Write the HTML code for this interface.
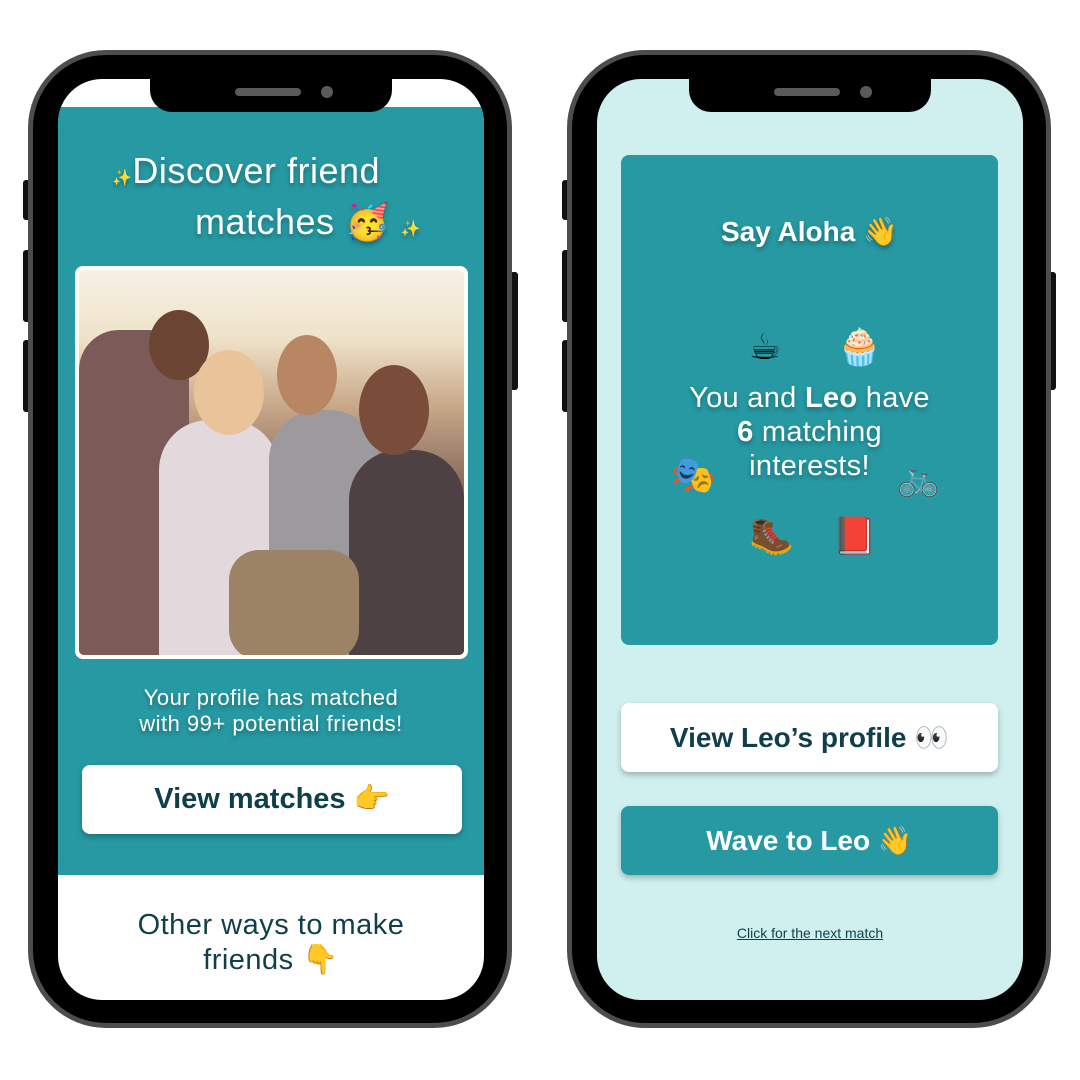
<!DOCTYPE html>
<html><head><meta charset="utf-8"><style>
*{margin:0;padding:0;box-sizing:border-box}
body{width:1080px;height:1080px;background:#fff;position:relative;overflow:hidden;font-family:"Liberation Sans","DejaVu Sans",sans-serif}
.abs{position:absolute}
.phone{position:absolute;top:50px;width:484px;height:978px;border-radius:78px;background:#000;border:5px solid #4d4d4d}
.btn{position:absolute;background:#111;border-radius:3px}
.screen{position:absolute;top:24px;left:25px;width:426px;height:921px;border-radius:44px;overflow:hidden}
.notch{position:absolute;top:0;width:242px;height:33px;background:#000;border-radius:0 0 22px 22px}
.spk{position:absolute;top:9px;width:66px;height:8px;border-radius:4px;background:#5a5a5a}
.cam{position:absolute;top:7px;width:12px;height:12px;border-radius:50%;background:#5a5a5a}
.sh{text-shadow:0 3px 5px rgba(0,0,0,.3)}
.dk{color:#0f3f4b}
.c{text-align:center}
</style></head><body>
<div class="btn" style="left:23px;top:180px;width:8px;height:40px"></div>
<div class="btn" style="left:23px;top:250px;width:8px;height:72px"></div>
<div class="btn" style="left:23px;top:340px;width:8px;height:72px"></div>
<div class="btn" style="left:510px;top:272px;width:8px;height:118px"></div>
<div class="btn" style="left:562px;top:180px;width:8px;height:40px"></div>
<div class="btn" style="left:562px;top:250px;width:8px;height:72px"></div>
<div class="btn" style="left:562px;top:340px;width:8px;height:72px"></div>
<div class="btn" style="left:1048px;top:272px;width:8px;height:118px"></div>

<div class="phone" style="left:28px">
 <div class="screen" style="background:#fff">
  <div class="abs" style="top:28px;left:0;width:426px;height:768px;background:#2699a3"></div>
  <div class="abs sh" style="top:70px;left:0;width:426px;color:#fff;font-size:36px;line-height:43px;letter-spacing:0.5px">
   <div style="padding-left:54px"><span style="font-size:16px">✨</span>Discover friend</div>
   <div style="padding-left:137px">matches 🥳 <span style="font-size:16px">✨</span></div>
  </div>
  <div class="abs" style="top:187px;left:17px;width:393px;height:393px;background:#fff;border-radius:8px;padding:4px">
   <div style="width:100%;height:100%;border-radius:5px;overflow:hidden;position:relative;background:linear-gradient(180deg,#f6f1e6 0%,#efe2c8 18%,#c9a98a 35%,#8a6d5e 55%,#5d5258 75%,#3e3d47 100%)">
    <div class="abs" style="left:0;top:60px;width:110px;height:330px;background:#7b5a57;border-radius:40px 40px 0 0"></div>
    <div class="abs" style="left:70px;top:40px;width:60px;height:70px;background:#6b4433;border-radius:50%"></div>
    <div class="abs" style="left:80px;top:150px;width:120px;height:240px;background:#e3d9dc;border-radius:50px 50px 0 0"></div>
    <div class="abs" style="left:115px;top:80px;width:70px;height:85px;background:#e9c49a;border-radius:50%"></div>
    <div class="abs" style="left:190px;top:140px;width:110px;height:250px;background:#9c9a9f;border-radius:50px 50px 0 0"></div>
    <div class="abs" style="left:198px;top:65px;width:60px;height:80px;background:#b98664;border-radius:50%"></div>
    <div class="abs" style="left:270px;top:180px;width:115px;height:210px;background:#4d4143;border-radius:50px 50px 0 0"></div>
    <div class="abs" style="left:280px;top:95px;width:70px;height:90px;background:#7a4d3a;border-radius:50%"></div>
    <div class="abs" style="left:150px;top:280px;width:130px;height:110px;background:#9d8366;border-radius:30px"></div>
   </div>
  </div>
  <div class="abs sh c" style="top:606px;left:0;width:426px;color:#fff;font-size:22px;line-height:26px;letter-spacing:0.5px">Your profile has matched<br>with 99+ potential friends!</div>
  <div class="abs c dk" style="top:686px;left:24px;width:380px;height:69px;background:#fff;border-radius:8px;box-shadow:0 3px 6px rgba(0,0,0,.25);font-size:29px;font-weight:bold;line-height:69px">View matches 👉</div>
  <div class="abs c dk" style="top:829px;left:0;width:426px;font-size:29px;line-height:35px;letter-spacing:0.5px">Other ways to make<br>friends 👇</div>
  <div class="notch" style="left:92px"><div class="spk" style="left:85px"></div><div class="cam" style="left:171px"></div></div>
 </div>
</div>

<div class="phone" style="left:567px">
 <div class="screen" style="background:#cff0ee">
  <div class="abs" style="top:76px;left:24px;width:377px;height:490px;background:#2699a3;border-radius:8px"></div>
  <div class="abs sh c" style="top:136px;left:24px;width:377px;color:#fff;font-size:28px;font-weight:bold">Say Aloha 👋</div>
  <div class="abs" style="top:247px;left:152px;font-size:36px">☕</div>
  <div class="abs" style="top:247px;left:240px;font-size:36px">🧁</div>
  <div class="abs sh c" style="top:302px;left:24px;width:377px;color:#fff;font-size:29px;line-height:34px;letter-spacing:0.3px">You and <b>Leo</b> have<br><b>6</b> matching<br>interests!</div>
  <div class="abs" style="top:375px;left:74px;font-size:36px">🎭</div>
  <div class="abs" style="top:380px;left:300px;font-size:34px">🚲</div>
  <div class="abs" style="top:436px;left:152px;font-size:36px">🥾</div>
  <div class="abs" style="top:436px;left:235px;font-size:36px">📕</div>
  <div class="abs c dk" style="top:624px;left:24px;width:377px;height:69px;background:#fff;border-radius:8px;box-shadow:0 3px 6px rgba(0,0,0,.25);font-size:28px;font-weight:bold;line-height:69px">View Leo’s profile 👀</div>
  <div class="abs c" style="top:727px;left:24px;width:377px;height:69px;background:#2699a3;border-radius:8px;box-shadow:0 3px 6px rgba(0,0,0,.25);font-size:28px;font-weight:bold;line-height:69px;color:#fff">Wave to Leo 👋</div>
  <div class="abs c dk" style="top:846px;left:0;width:426px;font-size:14px;text-decoration:underline">Click for the next match</div>
  <div class="notch" style="left:92px"><div class="spk" style="left:85px"></div><div class="cam" style="left:171px"></div></div>
 </div>
</div>
</body></html>
